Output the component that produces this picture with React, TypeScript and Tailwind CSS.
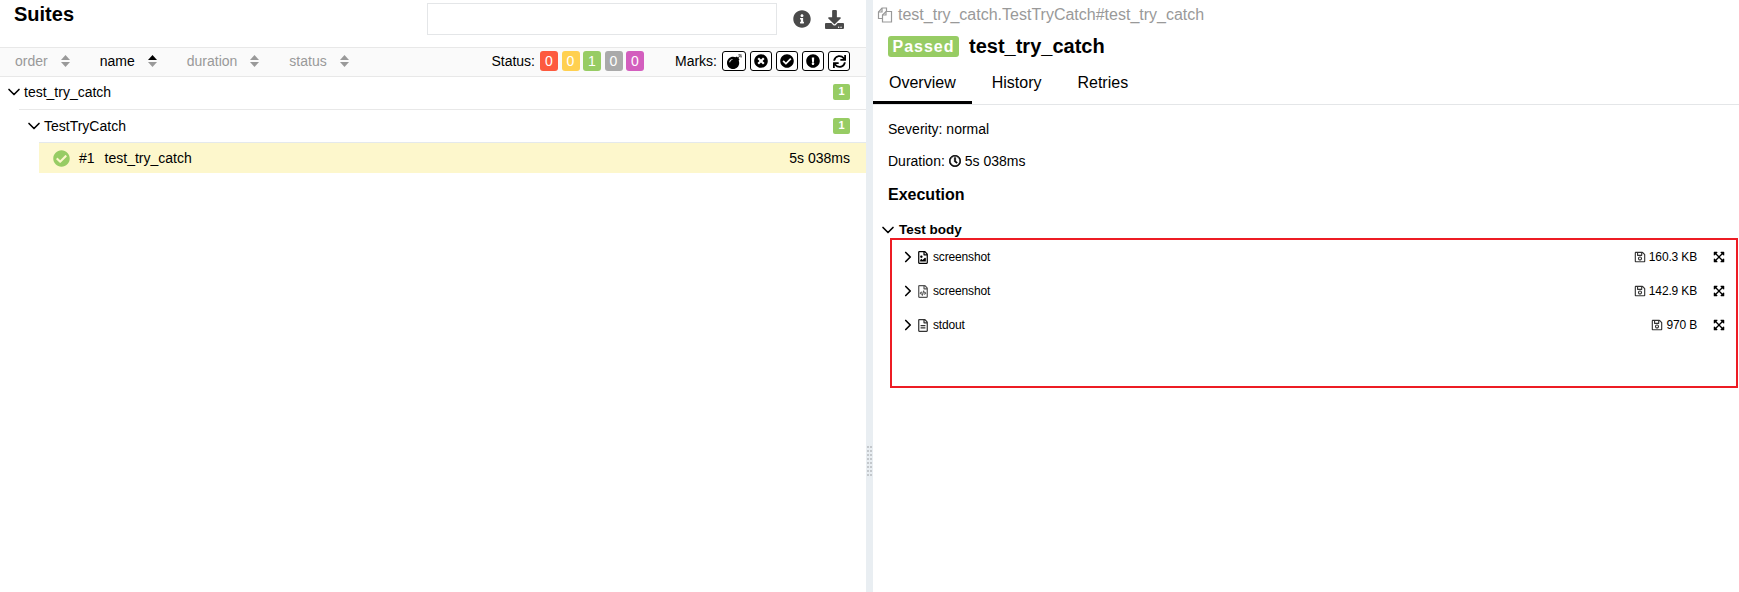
import { FaBomb, FaCheckCircle, FaDownload, FaExclamationCircle, FaExpandArrowsAlt, FaInfoCircle, FaRegClock, FaRegFileAlt, FaRegFileCode, FaRegFileImage, FaRegSave, FaSync, FaTimesCircle } from "react-icons/fa"
import { ChevronDown, ChevronRight } from "lucide-react"

function SortArrows({ active }: { active?: boolean }) {
  return (
    <svg width="9" height="12" viewBox="0 0 9 12" className="ml-[13px]">
      <path d="M4.5 0 L9 5 H0 Z" fill={active ? "#000" : "#999"} />
      <path d="M4.5 12 L9 7 H0 Z" fill="#999" />
    </svg>
  )
}

function Sorter({ label, active, className }: { label: string; active?: boolean; className: string }) {
  return (
    <div className={`flex items-center ${className} ${active ? "text-black" : "text-[#999]"}`}>
      {label}
      <SortArrows active={active} />
    </div>
  )
}

function CopyIcon() {
  return (
    <svg width="16" height="16" viewBox="0 0 16 16" fill="none" stroke="#999" strokeWidth="1.2" className="mr-[5px]">
      <path d="M5.5 11.5 H1.5 V5 L5 1 H9.5 V4.5" />
      <path d="M5 1 V5 H1.5" />
      <path d="M5.5 15 V8 L9 4.5 H14.5 V15 Z" />
      <path d="M9 4.5 V8 H5.5" />
    </svg>
  )
}

function Attachment({ icon, name, size }: { icon: React.ReactNode; name: string; size: string }) {
  return (
    <div className="flex h-[34px] items-center text-xs tracking-[-0.15px] text-black">
      <ChevronRight size={18} strokeWidth={2.2} className="ml-[7px]" />
      <span className="mr-[4px] flex w-[12px] justify-center">{icon}</span>
      {name}
      <FaRegSave size={12} className="ml-auto mr-[3px] text-[#333]" />
      {size}
      <FaExpandArrowsAlt size={12} className="ml-[16px] mr-[11px]" />
    </div>
  )
}

export default function App() {
  const statuses = [
    { n: 0, c: "bg-[#fd5a3e]" },
    { n: 0, c: "bg-[#ffd050]" },
    { n: 1, c: "bg-[#97cc64]" },
    { n: 0, c: "bg-[#aaaaaa]" },
    { n: 0, c: "bg-[#d35ebe]" },
  ]
  const marks = [
    <FaBomb key="bomb" size={15} />,
    <FaTimesCircle key="x" size={14} />,
    <FaCheckCircle key="check" size={14} />,
    <FaExclamationCircle key="ex" size={14} />,
    <FaSync key="sync" size={13} />,
  ]

  return (
    <div className="flex h-[592px] w-full overflow-hidden bg-white font-['Liberation_Sans',Arial,sans-serif] text-sm text-black">
      {/* Left pane */}
      <div className="w-[866px] shrink-0">
        <div className="flex h-[48px] items-start border-b border-[#e8e8e8]">
          <h2 className="ml-[14px] mt-[2px] text-xl leading-[24px] font-bold">Suites</h2>
          <input className="ml-[353px] mt-[3px] h-[32px] w-[350px] border border-[#e4e6e8] bg-white" />
          <FaInfoCircle size={18} className="ml-[16px] mt-[10px] text-[#4a4a4a]" />
          <FaDownload size={19} className="ml-[14px] mt-[10px] text-[#4a4a4a]" />
        </div>

        <div className="flex h-[29px] items-center border-b border-[#e8e8e8] bg-[#fafafa] pb-[2px] pl-[15px] pr-[16px]">
          <Sorter label="order" className="mr-[30px]" />
          <Sorter label="name" active className="mr-[30px]" />
          <Sorter label="duration" className="mr-[30px]" />
          <Sorter label="status" />
          <span className="ml-auto mr-[5px]">Status:</span>
          <div className="flex gap-[3.5px]">
            {statuses.map((s, i) => (
              <span key={i} className={`flex h-[20px] w-[18px] items-center justify-center rounded-[3px] text-white ${s.c}`}>
                {s.n}
              </span>
            ))}
          </div>
          <span className="ml-[31px] mr-[5px]">Marks:</span>
          <div className="flex gap-1">
            {marks.map((m, i) => (
              <span key={i} className={`flex h-[20px] items-center justify-center rounded-[3px] border border-black bg-white ${i === 0 ? "w-[24px]" : "w-[22px]"}`}>
                {m}
              </span>
            ))}
          </div>
        </div>

        <div className="flex h-[32px] items-center pb-[2px] pl-[4px] pr-[16px]">
          <ChevronDown size={20} strokeWidth={2} />
          test_try_catch
          <span className="ml-auto flex h-[16px] w-[17px] items-center justify-center rounded-[2px] bg-[#97cc64] text-[11px] font-bold text-white">1</span>
        </div>
        <div className="ml-[19px] flex h-[33px] items-center border-t border-[#e8e8e8] pb-[1px] pl-[5px] pr-[16px]">
          <ChevronDown size={20} strokeWidth={2} />
          TestTryCatch
          <span className="ml-auto flex h-[16px] w-[17px] items-center justify-center rounded-[2px] bg-[#97cc64] text-[11px] font-bold text-white">1</span>
        </div>
        <div className="ml-[39px] flex h-[31px] items-center border-t border-[#e4e9ec] bg-[#fdf7cc] pl-[14px] pr-[16px]">
          <FaCheckCircle size={17} className="mr-[9px] text-[#97cc64]" />
          <span className="mr-[10px]">#1</span>
          test_try_catch
          <span className="ml-auto">5s 038ms</span>
        </div>
      </div>

      {/* Splitter */}
      <div className="flex w-[7px] shrink-0 justify-center bg-[#e9eef2] pt-[446px]">
        <div className="grid h-fit grid-cols-2 gap-x-px gap-y-[2px]">
          {Array.from({ length: 16 }).map((_, i) => (
            <span key={i} className="h-[2px] w-[2px] bg-[#c4c8cc]" />
          ))}
        </div>
      </div>

      {/* Right pane */}
      <div className="min-w-0 flex-1">
        <div className="flex h-[30px] items-center pl-[4px] text-base text-[#999]">
          <CopyIcon />
          test_try_catch.TestTryCatch#test_try_catch
        </div>
        <div className="flex h-[33px] items-center pl-[15px]">
          <span className="flex h-[21px] w-[71px] items-center justify-center rounded-[3px] bg-[#97cc64] text-base font-bold tracking-[1px] text-white">Passed</span>
          <h2 className="ml-[10px] pb-[2px] text-xl font-bold">test_try_catch</h2>
        </div>
        <div className="flex h-[42px] gap-1 border-b border-[#e4e6e8] text-base">
          <div className="border-b-[3px] border-black px-4 pt-[8px]">Overview</div>
          <div className="px-4 pt-[8px]">History</div>
          <div className="px-4 pt-[8px]">Retries</div>
        </div>

        <div className="pl-[15px]">
          <div className="mt-[14px] leading-[20px]">Severity: normal</div>
          <div className="mt-[12px] flex items-center leading-[20px]">
            Duration:
            <FaRegClock size={12} stroke="currentColor" strokeWidth={24} className="ml-[4px] mr-[4px]" />
            5s 038ms
          </div>
          <div className="mt-[13px] text-base leading-[22px] font-bold">Execution</div>
        </div>

        <div className="mt-[14px] flex h-[18px] items-center pl-[5px] pt-[2px] text-[13.5px] font-bold">
          <ChevronDown size={20} strokeWidth={2} className="mr-px" />
          Test body
        </div>
        <div className="ml-[17px] mr-[1px] h-[150px] border-2 border-[#ed1c24]">
          <Attachment icon={<FaRegFileImage size={13} />} name="screenshot" size="160.3 KB" />
          <Attachment icon={<FaRegFileCode size={13} className="text-[#555]" />} name="screenshot" size="142.9 KB" />
          <Attachment icon={<FaRegFileAlt size={13} className="text-[#333]" />} name="stdout" size="970 B" />
        </div>
      </div>
    </div>
  )
}
